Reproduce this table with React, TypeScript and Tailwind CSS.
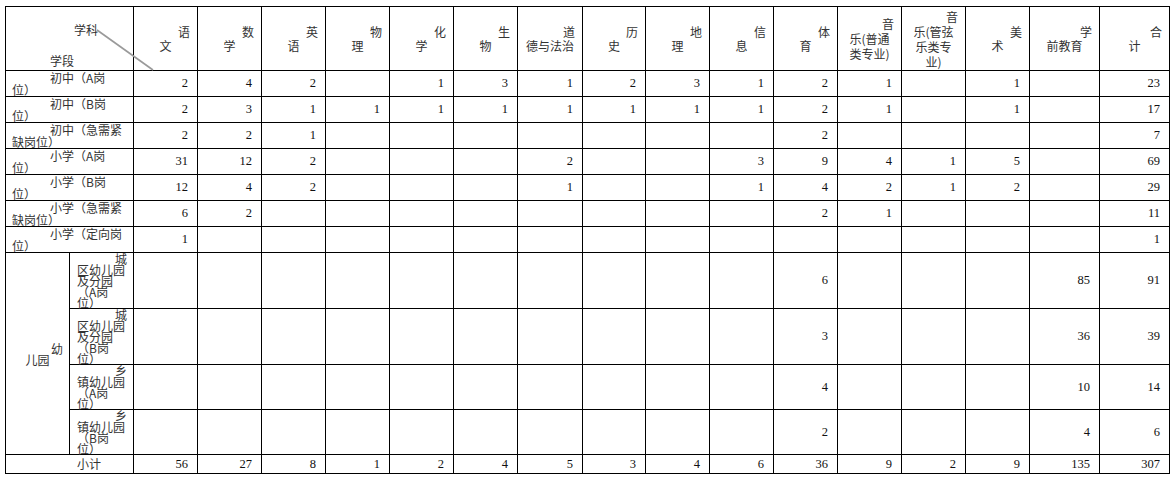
import React from "react";

const headers: string[][] = [
  ["语", "文"],
  ["数", "学"],
  ["英", "语"],
  ["物", "理"],
  ["化", "学"],
  ["生", "物"],
  ["道", "德与法治"],
  ["历", "史"],
  ["地", "理"],
  ["信", "息"],
  ["体", "育"],
  ["音", "乐(普通", "类专业)"],
  ["音", "乐(管弦", "乐类专", "业)"],
  ["美", "术"],
  ["学", "前教育"],
  ["合", "计"],
];

type Row = { label: string[]; values: (number | null)[] };
const _ = null;

const rows: Row[] = [
  { label: ["初中（A岗", "位）"], values: [2, 4, 2, _, 1, 3, 1, 2, 3, 1, 2, 1, _, 1, _, 23] },
  { label: ["初中（B岗", "位）"], values: [2, 3, 1, 1, 1, 1, 1, 1, 1, 1, 2, 1, _, 1, _, 17] },
  { label: ["初中（急需紧", "缺岗位）"], values: [2, 2, 1, _, _, _, _, _, _, _, 2, _, _, _, _, 7] },
  { label: ["小学（A岗", "位）"], values: [31, 12, 2, _, _, _, 2, _, _, 3, 9, 4, 1, 5, _, 69] },
  { label: ["小学（B岗", "位）"], values: [12, 4, 2, _, _, _, 1, _, _, 1, 4, 2, 1, 2, _, 29] },
  { label: ["小学（急需紧", "缺岗位）"], values: [6, 2, _, _, _, _, _, _, _, _, 2, 1, _, _, _, 11] },
  { label: ["小学（定向岗", "位）"], values: [1, _, _, _, _, _, _, _, _, _, _, _, _, _, _, 1] },
];

const kgRows: Row[] = [
  { label: ["城", "区幼儿园", "及分园", "（A岗", "位）"], values: [_, _, _, _, _, _, _, _, _, _, 6, _, _, _, 85, 91] },
  { label: ["城", "区幼儿园", "及分园", "（B岗", "位）"], values: [_, _, _, _, _, _, _, _, _, _, 3, _, _, _, 36, 39] },
  { label: ["乡", "镇幼儿园", "（A岗", "位）"], values: [_, _, _, _, _, _, _, _, _, _, 4, _, _, _, 10, 14] },
  { label: ["乡", "镇幼儿园", "（B岗", "位）"], values: [_, _, _, _, _, _, _, _, _, _, 2, _, _, _, 4, 6] },
];

const totals = [56, 27, 8, 1, 2, 4, 5, 3, 4, 6, 36, 9, 2, 9, 135, 307];

const cell = "border-r border-b border-black";
const cjk = "font-['Noto_Sans_CJK_SC','Noto_Sans',sans-serif] text-[12px] text-[#333]";

function NumCell({ v }: { v: number | null }) {
  return (
    <div
      className={`${cell} flex items-center justify-end pr-[9px] font-['Liberation_Serif',serif] text-[12.5px] leading-none text-[#111]`}
    >
      {v ?? ""}
    </div>
  );
}

export default function App() {
  return (
    <div className="bg-white w-[1175px] h-[481px] pt-[6px] pl-[5px]">
      <div className="relative w-fit">
        <div className="grid grid-cols-[64px_64px_64px_64px_64px_64px_64px_64px_65px_63px_64px_64px_64px_64px_64px_64px_70px_70px] grid-rows-[64px_26px_26px_26px_26px_26px_26px_26px_56px_56px_45px_45px_19px] border-l border-t border-black">
          {/* corner header */}
          <div className={`${cell} col-span-2 flex flex-col pt-[16px] leading-[14px] ${cjk}`}>
            <div className="pl-[68px]">学科</div>
            <div className="pl-[44px] mt-[17px]">学段</div>
          </div>
          {headers.map((h, i) => (
            <div
              key={i}
              className={`${cell} flex flex-col justify-center ${h.length > 2 ? "leading-[15px]" : "leading-[14px]"} ${cjk}`}
            >
              {h.map((line, j) => (
                <div key={j} className={j === 0 ? "text-right pr-[7px]" : "text-center whitespace-nowrap"}>
                  {line}
                </div>
              ))}
            </div>
          ))}

          {rows.map((r, i) => (
            <React.Fragment key={i}>
              <div className={`${cell} col-span-2 flex flex-col justify-center leading-[12px] whitespace-nowrap ${cjk}`}>
                <div className="pl-[44px]">{r.label[0]}</div>
                <div className="pl-[6px]">{r.label[1]}</div>
              </div>
              {r.values.map((v, j) => (
                <NumCell key={j} v={v} />
              ))}
            </React.Fragment>
          ))}

          {kgRows.map((r, i) => (
            <React.Fragment key={i}>
              {i === 0 && (
                <div className={`${cell} row-span-4 flex flex-col justify-center leading-[11px] ${cjk}`}>
                  <div className="text-right pr-[6px]">幼</div>
                  <div className="text-center">儿园</div>
                </div>
              )}
              <div className={`${cell} flex flex-col justify-center leading-[11px] whitespace-nowrap ${cjk}`}>
                {r.label.map((line, j) => (
                  <div key={j} className={j === 0 ? "text-right pr-[6px]" : "pl-[7px]"}>
                    {line}
                  </div>
                ))}
              </div>
              {r.values.map((v, j) => (
                <NumCell key={j} v={v} />
              ))}
            </React.Fragment>
          ))}

          <div className={`${cell} col-span-2 flex items-center pl-[71px] leading-[12px] ${cjk}`}>小计</div>
          {totals.map((v, j) => (
            <NumCell key={j} v={v} />
          ))}
        </div>

        <svg
          className="absolute left-0 top-0 pointer-events-none"
          width="160"
          height="70"
          viewBox="0 0 160 70"
        >
          <line x1="92" y1="24" x2="148" y2="64" stroke="#9a9a9a" strokeWidth="1.6" />
        </svg>
      </div>
    </div>
  );
}
